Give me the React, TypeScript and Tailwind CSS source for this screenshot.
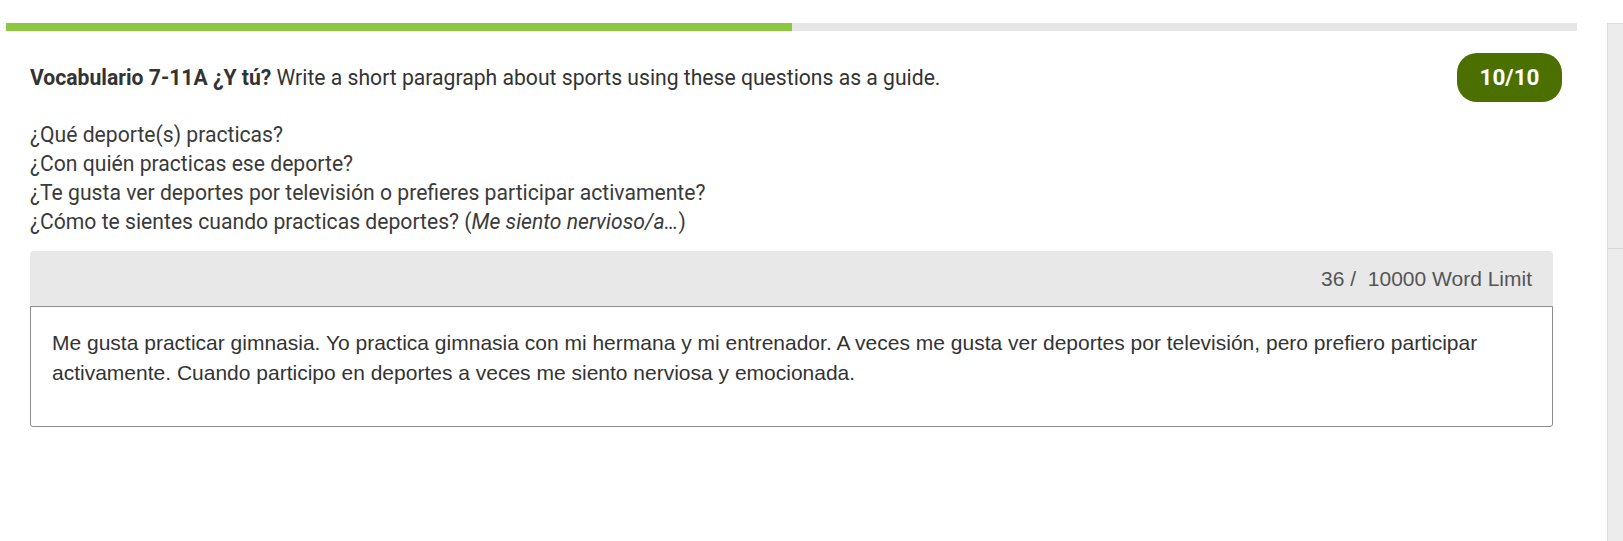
export default function App() {
  const questions = [
    '¿Qué deporte(s) practicas?',
    '¿Con quién practicas ese deporte?',
    '¿Te gusta ver deportes por televisión o prefieres participar activamente?',
  ];

  return (
    <div className="flex h-[541px] w-[1623px] overflow-hidden bg-white font-['Roboto',sans-serif] text-[#333]">
      <main className="ml-[6px] w-[1571px] shrink-0 pt-[23px]">
        {/* progress */}
        <div className="flex h-2 bg-[#e6e6e6]">
          <div className="w-[786px] bg-[#8dc63f]" />
        </div>

        <div className="pl-6 pr-[15px]">
          <div className="mt-[22px] flex items-center justify-between">
            <p className="text-[21.15px] leading-[29px]">
              <strong className="font-bold">Vocabulario 7-11A ¿Y tú?</strong> Write a short paragraph about
              sports using these questions as a guide.
            </p>
            <div className="flex h-[49px] w-[105px] items-center justify-center rounded-[20px] bg-[#4b7000] text-[22.5px] font-bold text-white">
              10/10
            </div>
          </div>

          <div className="mt-[18px] text-[21.15px] leading-[29px] text-[#3a3a3a]">
            {questions.map((q) => (
              <div key={q}>{q}</div>
            ))}
            <div>
              ¿Cómo te sientes cuando practicas deportes? (<em className="italic">Me siento nervioso/a…</em>)
            </div>
          </div>

          <div className="mr-[9px] mt-[15px] font-['Liberation_Sans',Arial,sans-serif]">
            <div className="flex h-[55px] items-center justify-end rounded-t-[4px] bg-[#e8e8e8] pr-[21px] text-[21px] text-[#555]">
              36 /&nbsp; 10000 Word Limit
            </div>
            <div className="h-[121px] rounded-b-[3px] border border-[#8c8c8c] px-[21px] pt-[21px] text-[21px] leading-[30px] text-[#333]">
              Me gusta practicar gimnasia. Yo practica gimnasia con mi hermana y mi entrenador. A veces me gusta ver
              deportes por televisión, pero prefiero participar activamente. Cuando participo en deportes a veces me
              siento nerviosa y emocionada.
            </div>
          </div>
        </div>
      </main>

      <aside className="ml-[30px] mt-[23px] flex-1 border-l border-t border-[#dcdcdc] bg-[#ececec]">
        <div className="mt-[224px] h-px bg-[#d6d6d6]" />
      </aside>
    </div>
  );
}
